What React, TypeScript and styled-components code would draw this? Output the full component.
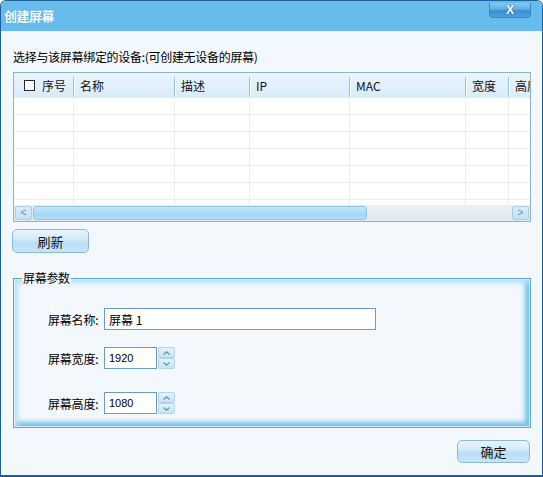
import React from 'react';
import styled, { createGlobalStyle } from 'styled-components';

const GlobalStyle = createGlobalStyle`
  html, body {
    margin: 0;
    padding: 0;
    background: #f3f8fd;
  }
  body {
    font-family: 'Liberation Sans', 'Noto Sans CJK SC', sans-serif;
    font-size: 12px;
    color: #000;
  }
  * {
    box-sizing: border-box;
  }
`;

const Window = styled.div`
  width: 543px;
  height: 477px;
  display: flex;
  flex-direction: column;
  background: #f3f8fd;
  border: 1px solid #1d5f96;
  border-bottom-width: 2px;
  border-radius: 6px 6px 0 0;
  overflow: hidden;
`;

const TitleBar = styled.div`
  height: 30px;
  flex-shrink: 0;
  display: flex;
  justify-content: space-between;
  background: #67bcee;
  padding: 0 11px 0 3px;
`;

const Title = styled.div`
  align-self: center;
  margin-top: -2px;
  color: #fff;
  font-family: 'Noto Sans CJK SC', sans-serif;
  font-weight: bold;
  font-size: 13px;
  letter-spacing: -0.5px;
  text-shadow: 0 0 1px #3d8bc4;
`;

const CloseButton = styled.div`
  width: 42px;
  height: 15px;
  margin-top: 2px;
  display: flex;
  align-items: center;
  justify-content: center;
  border-radius: 0 0 4px 4px;
  border: 1px solid #3b87c3;
  border-top: none;
  background: linear-gradient(#86c9f1 0%, #5eaee4 45%, #3a8fd2 55%, #4f9fdc 100%);
  color: #fff;
  font-family: 'Liberation Sans', sans-serif;
  font-weight: bold;
  font-size: 12px;
  line-height: 1;
  text-shadow: 0 0 2px #1a5a90;
`;

const Body = styled.div`
  flex: 1;
  display: flex;
  flex-direction: column;
  padding: 0 11px 0 12px;
`;

const Prompt = styled.div`
  margin-top: 18px;
  height: 16px;
  line-height: 16px;
  font-family: 'Noto Sans CJK SC', sans-serif;
  font-size: 12px;
  letter-spacing: -0.3px;
`;

const TableBox = styled.div`
  margin-top: 7px;
  height: 150px;
  border: 1px solid #8db2c9;
  background: #fff;
  display: flex;
  flex-direction: column;
  overflow: hidden;
`;

const COLS = '60px 101px 75px 100px 116px 43px 60px';

const HeaderRow = styled.div`
  height: 25px;
  flex-shrink: 0;
  display: grid;
  grid-template-columns: ${COLS};
  background: linear-gradient(#e9f4fd, #d8ebf9);
`;

const HeaderCell = styled.div<{ $pad?: number }>`
  position: relative;
  display: flex;
  align-items: center;
  gap: 7px;
  padding-left: ${(p) => p.$pad ?? 6}px;
  white-space: nowrap;
  font-family: 'Noto Sans CJK SC', sans-serif;
  font-size: 12px;
  color: #111;

  &::after {
    content: '';
    position: absolute;
    right: 0;
    top: 4px;
    bottom: 2px;
    width: 1px;
    background: #9dc0d8;
    box-shadow: 1px 0 0 #f6fbff;
  }
`;

const Check = styled.span`
  width: 11px;
  height: 11px;
  border: 1px solid #2b2b2b;
  background: #fff;
  flex-shrink: 0;
`;

const Rows = styled.div`
  flex: 1;
  overflow: hidden;
`;

const Row = styled.div`
  height: 17px;
  display: grid;
  grid-template-columns: ${COLS};
  border-bottom: 1px solid #ececec;
`;

const Cell = styled.div`
  border-right: 1px solid #ececec;
`;

const HScroll = styled.div`
  height: 16px;
  flex-shrink: 0;
  display: flex;
  padding: 1px;
  background: linear-gradient(#eaf1f4, #e1eaee);
  gap: 1px;
`;

const ArrowBtn = styled.div`
  width: 17px;
  display: flex;
  align-items: center;
  justify-content: center;
  border: 1px solid #a9cde3;
  border-radius: 2px;
  background: linear-gradient(#d9ecf8, #c3e0f3);
  color: #4f8fbc;
  font-size: 10px;
  font-family: 'Liberation Sans', sans-serif;
  line-height: 1;
`;

const Thumb = styled.div`
  width: 334px;
  border: 1px solid #8fc4e6;
  border-radius: 3px;
  background: linear-gradient(#c6e6fa, #a4d6f5 60%, #b3ddf7);
`;

const Track = styled.div`
  flex: 1;
`;

const Button = styled.div<{ $w: number }>`
  width: ${(p) => p.$w}px;
  height: 24px;
  display: flex;
  align-items: center;
  justify-content: center;
  border: 1px solid #8bb9d8;
  border-radius: 5px;
  background: linear-gradient(#eaf5fd 0%, #d3eafa 40%, #b9def6 60%, #c8e5f8 100%);
  font-family: 'Noto Sans CJK SC', sans-serif;
  font-size: 13px;
  color: #111;
`;

const RefreshButton = styled(Button)`
  margin-top: 7px;
  margin-left: -1px;
`;

const OkButton = styled(Button)`
  margin-top: 12px;
  align-self: flex-end;
  margin-right: 1px;
  height: 23px;
`;

const Group = styled.fieldset`
  margin: 18px 0 0 0;
  padding: 0 0 0 34px;
  height: 157px;
  min-width: 0;
  border: 1px solid #5aa6d6;
  box-shadow: inset 0 0 0 1px #d8eefb, inset 4px 4px 5px #b6e0f7, inset -5px -5px 5px #6fc1ea;
  display: flex;
  flex-direction: column;
`;

const Legend = styled.legend`
  margin-left: -26px;
  padding: 0 1px;
  background: #f3f8fd;
  font-family: 'Noto Sans CJK SC', sans-serif;
  font-size: 12px;
  line-height: 14px;
  letter-spacing: -0.3px;
`;

const FieldRow = styled.div<{ $top: number }>`
  display: flex;
  align-items: center;
  margin-top: ${(p) => p.$top}px;
`;

const Label = styled.span`
  width: 56px;
  font-family: 'Noto Sans CJK SC', sans-serif;
  font-size: 12px;
  letter-spacing: -0.2px;
`;

const Input = styled.div<{ $w: number }>`
  width: ${(p) => p.$w}px;
  height: 22px;
  display: flex;
  align-items: center;
  padding-left: 4px;
  border: 1px solid #6a9ec0;
  background: #fff;
  font-family: 'Noto Sans CJK SC', 'Liberation Sans', sans-serif;
  font-size: 12px;
`;

const NumText = styled.span`
  font-family: 'Liberation Sans', sans-serif;
  font-size: 11px;
`;

const Spinner = styled.div`
  width: 17px;
  height: 22px;
  display: flex;
  flex-direction: column;
  margin-left: 1px;
`;

const SpinHalf = styled.div`
  flex: 1;
  display: flex;
  align-items: center;
  justify-content: center;
  border: 1px solid #b3d4e8;
  border-radius: 2px;
  background: linear-gradient(#e4f2fb, #c6e3f5);
`;

const Chevron = ({ up }: { up?: boolean }) => (
  <svg width="7" height="4" viewBox="0 0 7 4">
    <path
      d={up ? 'M0.5 3.5 L3.5 0.8 L6.5 3.5' : 'M0.5 0.5 L3.5 3.2 L6.5 0.5'}
      fill="none"
      stroke="#5b93bd"
      strokeWidth="1.2"
    />
  </svg>
);

const columns = ['名称', '描述', 'IP', 'MAC', '宽度', '高度'];

export default function App() {
  return (
    <>
      <GlobalStyle />
      <Window>
        <TitleBar>
          <Title>创建屏幕</Title>
          <CloseButton>X</CloseButton>
        </TitleBar>
        <Body>
          <Prompt>选择与该屏幕绑定的设备:(可创建无设备的屏幕)</Prompt>
          <TableBox>
            <HeaderRow>
              <HeaderCell $pad={10}>
                <Check />
                序号
              </HeaderCell>
              {columns.map((c) => (
                <HeaderCell key={c}>{c}</HeaderCell>
              ))}
            </HeaderRow>
            <Rows>
              {Array.from({ length: 7 }).map((_, i) => (
                <Row key={i}>
                  {Array.from({ length: 7 }).map((__, j) => (
                    <Cell key={j} />
                  ))}
                </Row>
              ))}
            </Rows>
            <HScroll>
              <ArrowBtn>&lt;</ArrowBtn>
              <Thumb />
              <Track />
              <ArrowBtn>&gt;</ArrowBtn>
            </HScroll>
          </TableBox>
          <RefreshButton $w={77}>刷新</RefreshButton>
          <Group>
            <Legend>屏幕参数</Legend>
            <FieldRow $top={23}>
              <Label>屏幕名称:</Label>
              <Input $w={272}>屏幕 1</Input>
            </FieldRow>
            <FieldRow $top={17}>
              <Label>屏幕宽度:</Label>
              <Input $w={53}>
                <NumText>1920</NumText>
              </Input>
              <Spinner>
                <SpinHalf>
                  <Chevron up />
                </SpinHalf>
                <SpinHalf>
                  <Chevron />
                </SpinHalf>
              </Spinner>
            </FieldRow>
            <FieldRow $top={23}>
              <Label>屏幕高度:</Label>
              <Input $w={53}>
                <NumText>1080</NumText>
              </Input>
              <Spinner>
                <SpinHalf>
                  <Chevron up />
                </SpinHalf>
                <SpinHalf>
                  <Chevron />
                </SpinHalf>
              </Spinner>
            </FieldRow>
          </Group>
          <OkButton $w={73}>确定</OkButton>
        </Body>
      </Window>
    </>
  );
}
